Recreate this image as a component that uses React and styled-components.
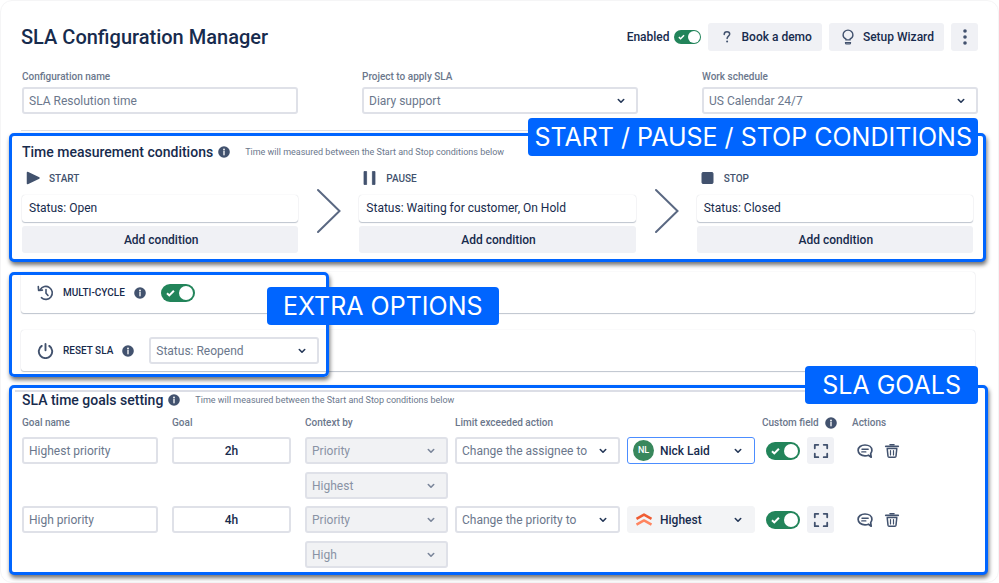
import { useId } from "react";
import styled, { createGlobalStyle, css } from "styled-components";

const colors = {
  navy: "#172b4d",
  slate: "#42526e",
  muted: "#6b778c",
  border: "#dfe1e8",
  fill: "#f0f1f5",
  green: "#22845a",
  blue: "#0065ff",
};

const GlobalStyle = createGlobalStyle`
  * {
    box-sizing: border-box;
  }

  body {
    margin: 0;
    background: #fff;
    color: ${colors.navy};
    font-family: Roboto, "Liberation Sans", sans-serif;
    font-size: 12px;
  }

  button,
  input,
  select {
    font: inherit;
    color: inherit;
    margin: 0;
  }
`;

// Layout
const Page = styled.main`
  min-height: 100vh;
  padding: 22px 0 7px;
  border: 1px solid #f5f5f6;
  border-radius: 12px;
`;

const Header = styled.header`
  display: flex;
  align-items: center;
  gap: 7px;
  margin: 0 20px 20px 20px;
`;

const Title = styled.h1`
  margin: 0 auto 0 0;
  font-size: 20px;
  line-height: 28px;
  font-weight: 500;
`;

const Fields = styled.div`
  display: grid;
  grid-template-columns: repeat(3, 1fr);
  gap: 64px;
  margin: 0 20px 0 21px;
`;

const Field = styled.div`
  display: flex;
  flex-direction: column;
  gap: 4px;
`;

const FieldLabel = styled.label`
  font-size: 10px;
  line-height: 12px;
  font-weight: 500;
  color: ${colors.muted};
`;

const Divider = styled.hr`
  height: ${({ $thick }) => ($thick ? 2 : 1)}px;
  margin: ${({ $thick }) => ($thick ? "2px 7px 0 -7px" : "16px 20px 2px")};
  border: 0;
  background: #dcdee6;
`;

// Highlighted areas
const frame = css`
  border: 3px solid ${colors.blue};
  border-radius: 5px;
  box-shadow: 1px 3px 4px rgba(0, 0, 0, 0.55);
`;

const Panel = styled.section`
  ${frame}
  position: relative;
  background: #fff;
`;

const ConditionsPanel = styled(Panel)`
  margin: 0 12px 10px 8px;
  padding: 6px 10px;
`;

const GoalsPanel = styled(Panel)`
  margin: 8px 10px 0 8px;
  padding: 0 10px;
`;

const OptionsArea = styled.section`
  position: relative;
  display: flex;
  flex-direction: column;
  gap: 17px;
  padding: 0 23px 6px 20px;
`;

const OptionsFrame = styled.div`
  ${frame}
  position: absolute;
  top: 0;
  bottom: 0;
  left: 8px;
  width: 320px;
  pointer-events: none;
`;

const Callout = styled.span`
  position: absolute;
  top: ${({ $top }) => $top}px;
  right: ${({ $right }) => ($right === undefined ? "auto" : `${$right}px`)};
  left: ${({ $left }) => ($left === undefined ? "auto" : `${$left}px`)};
  padding: 1px ${({ $pad }) => $pad}px 0;
  border-radius: 4px;
  background: ${colors.blue};
  color: #fff;
  font-family: Inter, sans-serif;
  font-size: 25px;
  line-height: 37px;
  white-space: nowrap;
`;

const SectionHeader = styled.div`
  display: flex;
  align-items: center;
  height: ${({ $height }) => $height}px;
`;

const SectionTitle = styled.h2`
  margin: 0 5px 0 0;
  font-size: 14px;
  line-height: 16px;
  font-weight: 500;
`;

const Hint = styled.p`
  margin: 0 0 0 15px;
  font-size: 9px;
  color: ${colors.muted};
`;

// Controls
const Button = styled.button`
  display: flex;
  align-items: center;
  justify-content: center;
  width: ${({ $wide }) => ($wide ? "100%" : "auto")};
  height: ${({ $wide }) => ($wide ? 27 : 28)}px;
  gap: 8px;
  padding: 0 10px 0 12px;
  border: 0;
  border-radius: 3px;
  background: ${colors.fill};
  font-weight: 500;
  white-space: nowrap;
`;

const IconButton = styled.button`
  display: flex;
  align-items: center;
  justify-content: center;
  width: ${({ $bare }) => ($bare ? 16 : 27)}px;
  height: ${({ $tall }) => ($tall ? 28 : 27)}px;
  padding: 0;
  border: 0;
  border-radius: 3px;
  background: ${({ $bare }) => ($bare ? "none" : colors.fill)};
  color: ${colors.slate};
`;

const controlBox = css`
  width: 100%;
  height: 27px;
  padding: 0 5px;
  border: 2px solid ${colors.border};
  border-radius: 3px;
  background: #fff;
  color: ${colors.muted};
`;

const TextInput = styled.input`
  ${controlBox}
  ${({ $center }) =>
    $center &&
    css`
      text-align: center;
      color: ${colors.navy};
      font-weight: 500;
    `}
`;

// The select and its icons share a single grid cell
const SelectWrap = styled.div`
  display: grid;
  grid-template-columns: 100%;
  align-items: center;
  width: ${({ $width }) => ($width ? `${$width}px` : "100%")};

  > * {
    grid-area: 1 / 1;
  }

  > :not(select) {
    pointer-events: none;
  }
`;

const SelectControl = styled.select`
  ${controlBox}
  appearance: none;
  opacity: 1;

  ${({ $tone }) =>
    $tone === "disabled" &&
    css`
      background: #f1f2f4;
      color: #8993a5;
    `}

  ${({ $tone }) =>
    ($tone === "active" || $tone === "filled") &&
    css`
      padding-left: 32px;
      border: 1px solid ${$tone === "active" ? "#4c8dff" : "#f3f4f6"};
      background: ${$tone === "active" ? "#fff" : "#f3f4f6"};
      color: ${colors.navy};
      font-weight: 500;
    `}
`;

const ChevronSlot = styled.span`
  display: flex;
  justify-self: end;
  margin-right: 13px;
  color: ${({ $dim }) => ($dim ? "#7a869a" : "#253858")};
`;

const AdornmentSlot = styled.span`
  display: flex;
  justify-content: center;
  width: 21px;
  margin-left: 6px;
`;

const Avatar = styled.span`
  width: 21px;
  border-radius: 50%;
  background: #38875c;
  color: #fff;
  font-size: 9px;
  line-height: 21px;
  font-weight: 500;
  text-align: center;
`;

const SwitchWrap = styled.span`
  display: grid;
  align-items: center;
  justify-content: start;

  > * {
    grid-area: 1 / 1;
  }

  > svg {
    margin-left: ${({ $small }) => ($small ? 4 : 5)}px;
    pointer-events: none;
  }
`;

const SwitchInput = styled.input`
  appearance: none;
  display: flex;
  justify-content: flex-end;
  width: ${({ $small }) => ($small ? 27 : 34)}px;
  height: ${({ $small }) => ($small ? 14 : 18)}px;
  padding: ${({ $small }) => ($small ? 1 : 2)}px;
  border-radius: 9px;
  background: ${colors.green};

  &::after {
    content: "";
    height: 100%;
    aspect-ratio: 1;
    border-radius: 50%;
    background: #fff;
  }
`;

const EnabledLabel = styled.label`
  display: flex;
  align-items: center;
  gap: 4px;
  font-weight: 500;
`;

// Conditions
const Steps = styled.div`
  display: flex;
  align-items: center;
  margin-top: 6px;
`;

const Step = styled.div`
  flex: 1;
`;

const StepArrow = styled.svg`
  flex: none;
  width: 61px;
  height: 46px;
`;

const StepName = styled.h3`
  display: flex;
  align-items: center;
  gap: 9px;
  height: 20px;
  margin: 0 0 7px 3px;
  font-size: 10px;
  font-weight: 500;
  color: ${colors.slate};
`;

const card = css`
  border-radius: 3px;
  background: #fff;
  box-shadow: 0 1px 1px rgba(9, 30, 66, 0.25), 0 0 1px rgba(9, 30, 66, 0.2);
`;

const Condition = styled.div`
  ${card}
  height: 27px;
  margin-bottom: 4px;
  padding: 0 7px;
  line-height: 27px;
`;

// Extra options
const OptionRow = styled.div`
  ${card}
  display: flex;
  align-items: center;
  height: 41px;
  padding-left: 16px;
`;

const OptionName = styled.label`
  margin: 0 9px;
  font-size: 10px;
  font-weight: 500;
`;

const OptionControl = styled.div`
  margin-left: 15px;
`;

// Goals
const GoalsTable = styled.table`
  width: 100%;
  margin-top: 8px;
  table-layout: fixed;
  border-collapse: collapse;
`;

const HeadCell = styled.th`
  padding: 0 0 7px;
  font-size: 10px;
  line-height: 14px;
  font-weight: 500;
  text-align: left;
  white-space: nowrap;
  color: ${colors.muted};
`;

const HeadContent = styled.span`
  display: flex;
  align-items: center;
  gap: 6px;
  height: 14px;
`;

const Cell = styled.td`
  padding: 0 ${({ $right = 7 }) => $right}px 7px ${({ $left = 0 }) => $left}px;
  vertical-align: top;

  tr:last-child > & {
    padding-bottom: 4px;
  }
`;

const Stack = styled.div`
  display: grid;
  gap: 8px;
`;

const Inline = styled.div`
  display: flex;
  align-items: center;
  gap: ${({ $gap }) => $gap}px;
`;

// Icons
const InfoIcon = () => (
  <svg width="12" height="12" viewBox="0 0 12 12">
    <circle cx="6" cy="6" r="5.8" fill={colors.slate} />
    <circle cx="6" cy="3.5" r="0.9" fill="#fff" />
    <path d="M6 5.4v3.4" stroke="#fff" strokeWidth="1.3" strokeLinecap="round" />
  </svg>
);

const ChevronDown = () => (
  <svg width="8" height="6" viewBox="0 0 8 6" fill="none">
    <path d="M1.3 1.5 4 4.2l2.7-2.7" stroke="currentColor" strokeWidth="1.6" strokeLinecap="round" strokeLinejoin="round" />
  </svg>
);

const QuestionIcon = () => (
  <svg width="14" height="16" viewBox="0 0 14 16" fill="none">
    <path d="M4.2 5.4c0-1.6 1.1-2.7 2.8-2.7s2.7 1 2.7 2.4c0 2-2.6 2.2-2.6 4.4" stroke={colors.slate} strokeWidth="1.5" strokeLinecap="round" />
    <circle cx="7.1" cy="12.5" r="1" fill={colors.slate} />
  </svg>
);

const BulbIcon = () => (
  <svg width="14" height="16" viewBox="0 0 14 16" fill="none" stroke={colors.slate}>
    <path d="M4.9 10.9V10C3.2 9.3 2.1 7.800 2.100 6a4.900 4.900 0 0 1 9.800 0c0 1.800-1.100 3.300-2.800 4v.9z" strokeWidth="1.400" strokeLinejoin="round" />
    <path d="M4.500 13.500h5v.4c0 .6-.4 1-1 1h-3c-.6 0-1-.4-1-1z" strokeWidth="1.200" />
  </svg>
);

const MoreIcon = () => (
  <svg width="6" height="18" viewBox="0 0 6 18" fill={colors.slate}>
    <circle cx="3" cy="3" r="1.8" />
    <circle cx="3" cy="9" r="1.8" />
    <circle cx="3" cy="15" r="1.8" />
  </svg>
);

const stepShapes = {
  START: <path d="M2.500 1.500v11L14 7z" strokeWidth="1.500" strokeLinejoin="round" />,
  PAUSE: <path d="M2 .5h2.600v13H2zM10.400 .5H13v13h-2.600z" strokeWidth=".8" strokeLinejoin="round" />,
  STOP: <rect x="2" y="1.500" width="11" height="11" rx="1" />,
};

const StepIcon = ({ name }) => (
  <svg width="15" height="14" viewBox="0 0 15 14" fill={colors.slate} stroke={colors.slate}>
    {stepShapes[name]}
  </svg>
);

const HistoryIcon = () => (
  <svg width="17" height="16" viewBox="0 0 17 16" fill="none" stroke={colors.slate} strokeWidth="1.600" strokeLinecap="round" strokeLinejoin="round">
    <path d="M3.200 4.600A6.500 6.500 0 1 1 4.400 12.700" />
    <path d="M1.300 1.600l.3 3.800 3.800-.3M9 4.600v3.700l2 2.200" />
  </svg>
);

const PowerIcon = () => (
  <svg width="17" height="16" viewBox="0 0 17 16" fill="none" stroke={colors.slate} strokeWidth="1.900" strokeLinecap="round">
    <path d="M8.500 1v6.200M4.700 2.900a6.700 6.700 0 1 0 7.600 0" />
  </svg>
);

const ExpandIcon = () => (
  <svg width="16" height="16" viewBox="0 0 16 16" fill="none" stroke={colors.slate} strokeWidth="1.800" strokeLinecap="round" strokeLinejoin="round">
    <path d="M1.800 5.300V1.800h3.500M10.700 1.800h3.500v3.500M14.200 10.700v3.500h-3.500M5.300 14.200H1.800v-3.500" />
  </svg>
);

const CommentIcon = () => (
  <svg width="16" height="16" viewBox="0 0 16 16" fill="none" stroke={colors.slate} strokeWidth="1.700" strokeLinecap="round" strokeLinejoin="round">
    <path d="M13.700 10.600A5.800 5.800 0 0 0 14.900 7.300C14.900 4.200 11.900 2 8 2S1.100 4.200 1.100 7.300s3 5.500 6.900 5.500c1.300 0 2.500-.2 3.500-.6l2.700 2z" />
    <path d="M5 6.200h6.200M4.800 8.900h4" strokeWidth="1.400" />
  </svg>
);

const TrashIcon = () => (
  <svg width="16" height="16" viewBox="0 0 16 16" fill="none" stroke={colors.slate} strokeLinecap="round" strokeLinejoin="round">
    <path d="M1.800 3.300h12.400" strokeWidth="1.800" />
    <path d="M6 1.800h4M3.200 5.600l.8 7.600c.1.600.5 1 1.100 1h5.800c.6 0 1-.4 1.100-1l.8-7.600z" strokeWidth="1.500" />
    <path d="M6.500 7.500v4.500M9.500 7.500v4.500" strokeWidth="1.200" />
  </svg>
);

const HighestIcon = () => (
  <svg width="18" height="15" viewBox="0 0 18 15" fill="none" strokeWidth="2.500" strokeLinejoin="round">
    <path d="M1.500 6.800 9 2.600l7.500 4.200" stroke="#ef5c33" />
    <path d="M1.500 12.600 9 8.400l7.500 4.200" stroke="#ff8560" />
  </svg>
);

const Check = ({ small }) => (
  <svg width={small ? 7 : 9} height={small ? 6 : 8} viewBox="0 0 9 8" fill="none">
    <path d="M1 4.200l2.300 2.200L7.900 1.700" stroke="#fff" strokeWidth="2" />
  </svg>
);

function Select({ value, label, id, tone, width, adornment }) {
  const disabled = tone === "disabled";
  return (
    <SelectWrap $width={width}>
      <SelectControl id={id} aria-label={label} $tone={tone} disabled={disabled}>
        <option>{value}</option>
      </SelectControl>
      {adornment && <AdornmentSlot>{adornment}</AdornmentSlot>}
      <ChevronSlot $dim={disabled}>
        <ChevronDown />
      </ChevronSlot>
    </SelectWrap>
  );
}

function Switch({ id, label, small }) {
  return (
    <SwitchWrap $small={small}>
      <SwitchInput type="checkbox" role="switch" id={id} aria-label={label} $small={small} defaultChecked />
      <Check small={small} />
    </SwitchWrap>
  );
}

function LabelledField({ label, children }) {
  const id = useId();
  return (
    <Field>
      <FieldLabel htmlFor={id}>{label}</FieldLabel>
      {children(id)}
    </Field>
  );
}

const Arrow = () => (
  <StepArrow viewBox="0 0 61 46" fill="none" aria-hidden="true">
    <path d="M20 2l21.500 21L20 44" stroke="#5a6882" strokeWidth="2" strokeLinecap="round" />
  </StepArrow>
);

function ConditionStep({ name, status }) {
  return (
    <Step>
      <StepName>
        <StepIcon name={name} />
        {name}
      </StepName>
      <Condition>Status: {status}</Condition>
      <Button type="button" $wide>
        Add condition
      </Button>
    </Step>
  );
}

const goals = [
  {
    name: "Highest priority",
    time: "2h",
    context: "Highest",
    action: "Change the assignee to",
    target: { value: "Nick Laid", tone: "active", label: "Assignee", adornment: <Avatar>NL</Avatar> },
  },
  {
    name: "High priority",
    time: "4h",
    context: "High",
    action: "Change the priority to",
    target: { value: "Highest", tone: "filled", label: "Priority", adornment: <HighestIcon /> },
  },
];

function GoalRow({ goal }) {
  return (
    <tr>
      <Cell $right={14}>
        <TextInput aria-label="Goal name" defaultValue={goal.name} />
      </Cell>
      <Cell $right={14}>
        <TextInput aria-label="Goal" defaultValue={goal.time} $center />
      </Cell>
      <Cell>
        <Stack>
          <Select label="Context by" value="Priority" tone="disabled" />
          <Select label="Context value" value={goal.context} tone="disabled" />
        </Stack>
      </Cell>
      <Cell>
        <Select label="Limit exceeded action" value={goal.action} />
      </Cell>
      <Cell>
        <Select {...goal.target} />
      </Cell>
      <Cell $left={4} $right={0}>
        <Inline $gap={7}>
          <Switch label="Custom field" />
          <IconButton type="button" aria-label="Expand">
            <ExpandIcon />
          </IconButton>
        </Inline>
      </Cell>
      <Cell $left={5} $right={0}>
        <Inline $gap={11}>
          <IconButton type="button" aria-label="Comment" $bare>
            <CommentIcon />
          </IconButton>
          <IconButton type="button" aria-label="Delete" $bare>
            <TrashIcon />
          </IconButton>
        </Inline>
      </Cell>
    </tr>
  );
}

function App() {
  return (
    <>
      <GlobalStyle />
      <Page>
        <Header>
          <Title>SLA Configuration Manager</Title>
          <EnabledLabel>
            Enabled
            <Switch small />
          </EnabledLabel>
          <Button type="button">
            <QuestionIcon />
            Book a demo
          </Button>
          <Button type="button">
            <BulbIcon />
            Setup Wizard
          </Button>
          <IconButton type="button" aria-label="More" $tall>
            <MoreIcon />
          </IconButton>
        </Header>

        <Fields>
          <LabelledField label="Configuration name">
            {(id) => <TextInput id={id} defaultValue="SLA Resolution time" />}
          </LabelledField>
          <LabelledField label="Project to apply SLA">
            {(id) => <Select id={id} value="Diary support" />}
          </LabelledField>
          <LabelledField label="Work schedule">
            {(id) => <Select id={id} value="US Calendar 24/7" />}
          </LabelledField>
        </Fields>
        <Divider />

        <ConditionsPanel>
          <SectionHeader $height={20}>
            <SectionTitle>Time measurement conditions</SectionTitle>
            <InfoIcon />
            <Hint>Time will measured between the Start and Stop conditions below</Hint>
          </SectionHeader>
          <Steps>
            <ConditionStep name="START" status="Open" />
            <Arrow />
            <ConditionStep name="PAUSE" status="Waiting for customer, On Hold" />
            <Arrow />
            <ConditionStep name="STOP" status="Closed" />
          </Steps>
          <Callout $top={-18} $right={5} $pad={6}>
            START / PAUSE / STOP CONDITIONS
          </Callout>
        </ConditionsPanel>

        <OptionsArea>
          <OptionRow>
            <HistoryIcon />
            <OptionName htmlFor="multi-cycle">MULTI-CYCLE</OptionName>
            <InfoIcon />
            <OptionControl>
              <Switch id="multi-cycle" />
            </OptionControl>
          </OptionRow>
          <OptionRow>
            <PowerIcon />
            <OptionName htmlFor="reset-sla">RESET SLA</OptionName>
            <InfoIcon />
            <OptionControl>
              <Select id="reset-sla" value="Status: Reopend" width={170} />
            </OptionControl>
          </OptionRow>
          <OptionsFrame />
          <Callout $top={15} $left={266} $pad={16}>
            EXTRA OPTIONS
          </Callout>
        </OptionsArea>

        <GoalsPanel>
          <Divider $thick />
          <SectionHeader $height={16}>
            <SectionTitle>SLA time goals setting</SectionTitle>
            <InfoIcon />
            <Hint>Time will measured between the Start and Stop conditions below</Hint>
          </SectionHeader>
          <GoalsTable>
            <colgroup>
              <col />
              <col width="133" />
              <col width="150" />
              <col width="172" />
              <col width="135" />
              <col width="90" />
              <col width="123" />
            </colgroup>
            <thead>
              <tr>
                <HeadCell>Goal name</HeadCell>
                <HeadCell>Goal</HeadCell>
                <HeadCell>Context by</HeadCell>
                <HeadCell colSpan={2}>Limit exceeded action</HeadCell>
                <HeadCell>
                  <HeadContent>
                    Custom field
                    <InfoIcon />
                  </HeadContent>
                </HeadCell>
                <HeadCell>Actions</HeadCell>
              </tr>
            </thead>
            <tbody>
              {goals.map((goal) => (
                <GoalRow key={goal.name} goal={goal} />
              ))}
            </tbody>
          </GoalsTable>
          <Callout $top={-22} $right={7} $pad={17}>
            SLA GOALS
          </Callout>
        </GoalsPanel>
      </Page>
    </>
  );
}

export default App;
